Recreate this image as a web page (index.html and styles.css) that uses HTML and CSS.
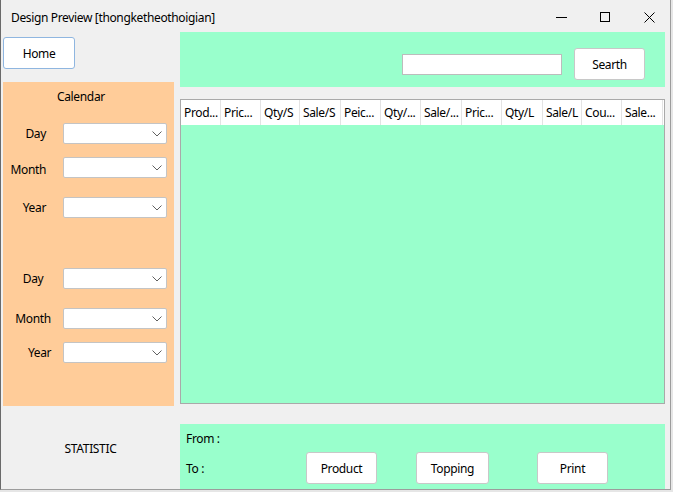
FILE: index.html
```html
<!DOCTYPE html>
<html>
<head>
<meta charset="utf-8">
<title>Design Preview</title>
<link rel="stylesheet" href="styles.css">
</head>
<body>
<div class="window">
  <div class="titlebar">
    <span class="title">Design Preview [thongketheothoigian]</span>
    <div class="caption">
      <svg class="cap-icon" width="11" height="11" viewBox="0 0 11 11"><path d="M0 5.5H10.5" stroke="#000" stroke-width="1" shape-rendering="crispEdges"/></svg>
      <svg class="cap-icon" width="11" height="11" viewBox="0 0 11 11"><rect x="0.5" y="0.5" width="9" height="9" fill="none" stroke="#000" stroke-width="1" shape-rendering="crispEdges"/></svg>
      <svg class="cap-icon" width="11" height="11" viewBox="0 0 11 11"><path d="M0.5 0.5L10.5 10.5M10.5 0.5L0.5 10.5" stroke="#000" stroke-width="1"/></svg>
    </div>
  </div>
  <div class="content">
    <div class="left">
      <button class="btn home">Home</button>
      <div class="calendar">
        <div class="cal-title">Calendar</div>
        <div class="field r1"><label>Day</label><div class="combo"><svg width="10" height="6" viewBox="0 0 10 6"><path d="M0.5 0.5L5 5L9.5 0.5" fill="none" stroke="#606060" stroke-width="1"/></svg></div></div>
        <div class="field r2"><label>Month</label><div class="combo"><svg width="10" height="6" viewBox="0 0 10 6"><path d="M0.5 0.5L5 5L9.5 0.5" fill="none" stroke="#606060" stroke-width="1"/></svg></div></div>
        <div class="field r3"><label>Year</label><div class="combo"><svg width="10" height="6" viewBox="0 0 10 6"><path d="M0.5 0.5L5 5L9.5 0.5" fill="none" stroke="#606060" stroke-width="1"/></svg></div></div>
        <div class="field alt r4"><label>Day</label><div class="combo"><svg width="10" height="6" viewBox="0 0 10 6"><path d="M0.5 0.5L5 5L9.5 0.5" fill="none" stroke="#606060" stroke-width="1"/></svg></div></div>
        <div class="field alt r5"><label>Month</label><div class="combo"><svg width="10" height="6" viewBox="0 0 10 6"><path d="M0.5 0.5L5 5L9.5 0.5" fill="none" stroke="#606060" stroke-width="1"/></svg></div></div>
        <div class="field alt r6"><label class="shift">Year</label><div class="combo"><svg width="10" height="6" viewBox="0 0 10 6"><path d="M0.5 0.5L5 5L9.5 0.5" fill="none" stroke="#606060" stroke-width="1"/></svg></div></div>
      </div>
      <div class="statistic">STATISTIC</div>
    </div>
    <div class="right">
      <div class="searchbar">
        <div class="search"></div>
        <button class="btn searth">Searth</button>
      </div>
      <div class="grid">
        <div class="grid-head">
          <div class="col">Prod...</div>
          <div class="col">Pric...</div>
          <div class="col">Qty/S</div>
          <div class="col">Sale/S</div>
          <div class="col">Peic...</div>
          <div class="col">Qty/...</div>
          <div class="col">Sale/...</div>
          <div class="col">Pric...</div>
          <div class="col">Qty/L</div>
          <div class="col">Sale/L</div>
          <div class="col">Cou...</div>
          <div class="col">Sale...</div>
        </div>
      </div>
      <div class="footer">
        <div class="from">From :</div>
        <div class="to-row">
          <span class="to">To :</span>
          <button class="btn act product">Product</button>
          <button class="btn act topping">Topping</button>
          <button class="btn act print">Print</button>
        </div>
      </div>
    </div>
  </div>
</div>
</body>
</html>
```
FILE: styles.css
```css
* { box-sizing: border-box; }
html, body { margin: 0; padding: 0; }
body {
  width: 673px;
  height: 492px;
  background: #e6e6e6;
  font-family: "Noto Sans", "Open Sans", sans-serif;
  font-size: 12px;
  letter-spacing: -0.35px;
  color: #000;
  overflow: hidden;
}
.window {
  width: 671px;
  height: 490px;
  background: #f0f0f0;
  border-left: 1px solid #6a6a6a;
  border-right: 1px solid #9c9c9c;
  border-bottom: 1px solid #9c9c9c;
  display: flex;
  flex-direction: column;
}
.titlebar {
  height: 32px;
  display: flex;
  align-items: center;
  padding-left: 10px;
  padding-top: 3px;
  flex: none;
}
.title { line-height: 16px; }
.caption {
  margin-left: auto;
  display: flex;
  align-items: center;
  gap: 33px;
  padding-right: 15px;
}
.cap-icon { display: block; }
.content {
  flex: 1;
  display: grid;
  grid-template-columns: 171px 485px;
  column-gap: 6px;
  padding-left: 2px;
  min-height: 0;
}
.left, .right { display: flex; flex-direction: column; }
.btn {
  font-family: inherit;
  font-size: 12px;
  letter-spacing: -0.35px;
  color: #000;
  background: #fff;
  border: 1px solid #c8c8c8;
  border-radius: 3px;
  padding: 0;
  display: flex;
  align-items: center;
  justify-content: center;
}
.home {
  margin-top: 5px;
  width: 72px;
  height: 32px;
  border-color: #8fb6e0;
}
.calendar {
  margin-top: 13px;
  height: 324px;
  background: #ffcc99;
  display: flex;
  flex-direction: column;
}
.cal-title { padding: 7px 0 0 54px; line-height: 16px; }
.field { display: flex; align-items: center; height: 21px; }
.field label { width: 60px; padding-right: 17px; text-align: right; line-height: 16px; }
.field.alt label { padding-right: 0; text-align: center; }
.field.alt label.shift { padding-left: 13px; }
.r1 { margin-top: 18px; }
.r2 { margin-top: 13px; }
.r2 label { padding-top: 4px; }
.r3 { margin-top: 19px; }
.r4 { margin-top: 50px; }
.r5 { margin-top: 19px; }
.r6 { margin-top: 13px; }
.combo {
  width: 104px;
  height: 21px;
  background: #fff;
  border: 1px solid #c4c4c4;
  border-radius: 2px;
  display: flex;
  align-items: center;
  justify-content: flex-end;
  padding-right: 4px;
}
.combo svg { display: block; }
.statistic {
  flex: 1;
  display: flex;
  align-items: center;
  justify-content: center;
  padding-top: 1px;
  padding-left: 4px;
}
.searchbar {
  height: 55px;
  background: #99ffcc;
  display: flex;
  align-items: center;
  justify-content: flex-end;
  padding: 9px 20px 0 0;
  gap: 12px;
  flex: none;
}
.search {
  width: 160px;
  height: 21px;
  background: #fff;
  border: 1px solid #bcbcbc;
}
.searth { width: 71px; height: 32px; }
.grid {
  margin-top: 12px;
  height: 305px;
  border: 1px solid #a9a9a9;
  background: #99ffcc;
  width: 485px;
  flex: none;
}
.grid-head {
  display: grid;
  grid-template-columns: 40px 40px 39px 41px 40px 40px 41px 40px 41px 39px 40px 41px;
  height: 25px;
  background: #fff;
}
.col {
  border-right: 1px solid #e3e3e3;
  padding-left: 3px;
  display: flex;
  align-items: center;
  white-space: nowrap;
  overflow: hidden;
}
.footer {
  margin-top: 20px;
  flex: 1;
  background: #99ffcc;
  display: flex;
  flex-direction: column;
}
.from { height: 28px; display: flex; align-items: center; padding: 0 0 0 6px; }
.to-row { display: flex; align-items: center; height: 32px; }
.to { width: 126px; padding-left: 6px; }
.act { height: 32px; }
.product { width: 71px; }
.topping { width: 73px; margin-left: 39px; }
.print { width: 71px; margin-left: 48px; }
```
